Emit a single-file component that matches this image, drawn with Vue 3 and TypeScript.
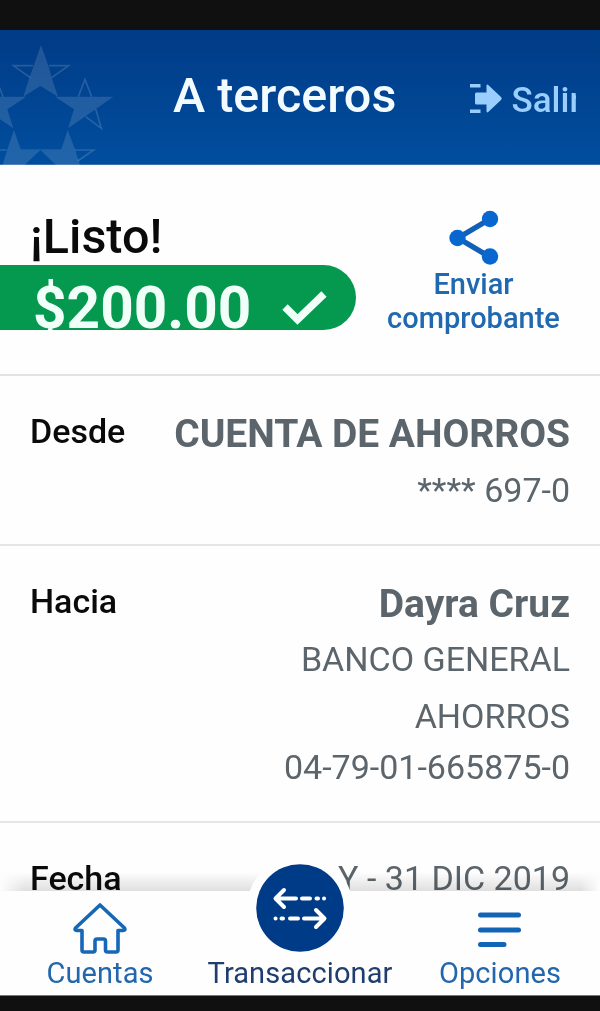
<script setup lang="ts">
interface Row {
  label: string
  title?: string
  lines: string[]
  kind: string
}

const rows: Row[] = [
  { label: 'Desde', title: 'CUENTA DE AHORROS', lines: ['**** 697-0'], kind: 'from' },
  { label: 'Hacia', title: 'Dayra Cruz', lines: ['BANCO GENERAL', 'AHORROS', '04-79-01-665875-0'], kind: 'to' },
  { label: 'Fecha', lines: ['Y - 31 DIC 2019'], kind: 'date' },
]
</script>

<template>
  <div class="screen">
    <div class="status"></div>
    <header class="header">
      <svg class="stars" width="120" height="135" viewBox="0 30 360 405">
        <g fill="#fff" fill-opacity=".13">
          <path d="M123 75 147 143 157 180 174 230 121 198 70 230 86 180 99 143Z" />
          <path d="M340 230 265 283 204 325 222 268 165 230H235Z" />
          <path d="M-96 230-21 283 40 325 22 268 79 230H9Z" />
          <path d="M203 330 225 388 240 435H168L121 390V388H184Z" />
          <path d="M42 330 62 388H121V390L74 435H8L22 388Z" />
        </g>
        <g fill="none" stroke="#fff" stroke-opacity=".15" stroke-width="5">
          <path d="M99 137H40L91 173M147 137H206L155 173" />
          <path d="M235 230 255 178 275 230M257 290 304 325 287 267" />
          <path d="M9 230-11 178-30 227" />
          <path d="M224 390H281L233 423M20 390H-37" />
        </g>
      </svg>
      <h1>A terceros</h1>
      <div class="exit">
        <svg width="33" height="32" viewBox="0 0 33 32">
          <path d="M0 1H10.500V4.500H0ZM0 26.500H10.500V30H0Z" fill="#99ceff" />
          <path d="M6.500 9.500H16.500V3Q16.500 .5 18.500 2.200L31 14Q32.500 15.500 31 17L18.500 28.800Q16.500 30.500 16.500 28V21.500H6.500Q5 21.500 5 20V11Q5 9.500 6.500 9.500Z" fill="#99ceff" />
        </svg>
        <span>Salir</span>
      </div>
    </header>

    <section class="summary">
      <div class="done">
        <h2>¡Listo!</h2>
        <div class="amount">
          <span>$200.00</span>
          <svg width="46" height="36" viewBox="0 0 46 36">
            <path d="M4 18 16.500 30.500 43 5" fill="none" stroke="#f0fff8" stroke-width="7.500" />
          </svg>
        </div>
      </div>
      <div class="share">
        <svg width="50" height="56" viewBox="0 0 50 56">
          <path d="M41 9 9 28 41 47" fill="none" stroke="#1260b5" stroke-width="5.500" />
          <g fill="#0867cf"><circle cx="41" cy="9" r="8.200" /><circle cx="8.500" cy="28" r="8.200" /><circle cx="41" cy="46.500" r="8.200" /></g>
        </svg>
        <span>Enviar</span>
        <span class="receipt">comprobante</span>
      </div>
    </section>

    <section v-for="row in rows" :key="row.label" class="row" :class="row.kind">
      <div class="label">{{ row.label }}</div>
      <div class="values">
        <strong v-if="row.title">{{ row.title }}</strong>
        <span v-for="line in row.lines" :key="line">{{ line }}</span>
      </div>
    </section>

    <nav class="nav">
      <div class="shade"></div>
      <div class="halo"></div>
      <div class="bar">
        <div class="item accounts">
          <svg width="56" height="54" viewBox="0 0 56 54">
            <path d="M28 3 52.500 26Q54 28.500 51 28.500H46V48Q46 50 44 50H35.500Q33.500 50 33.500 48V39Q33.500 37 31.500 37H25Q23 37 23 39V48Q23 50 21 50H12Q10 50 10 48V28.500H5Q2 28.500 3.500 26Z" fill="none" stroke="#1767b7" stroke-width="3.600" stroke-linejoin="round" />
          </svg>
          <span>Cuentas</span>
        </div>
        <div class="item transact">
          <svg width="88" height="88" viewBox="0 0 88 88">
            <circle cx="44" cy="44" r="43.800" fill="#003b87" />
            <g fill="none" stroke="#fff" stroke-width="4" stroke-linecap="round" stroke-linejoin="round">
              <path d="M28 26 19.500 34.500 28 43M21 34.500H40M46 34.500H54" />
              <path d="M60.500 34.500H62M68 34.500H68.100M19.500 54.500H19.600M25.500 54.500H27M34 54.500H42M48 54.500H67M60 46 68.500 54.500 60 63" />
            </g>
          </svg>
          <span>Transaccionar</span>
        </div>
        <div class="item options">
          <svg width="46" height="38" viewBox="0 0 46 38">
            <path d="M3.500 4H41.500M3.500 19H41.500M3.500 33.500H27" fill="none" stroke="#1264b7" stroke-width="5" stroke-linecap="round" />
          </svg>
          <span>Opciones</span>
        </div>
      </div>
      <div class="bottom"></div>
    </nav>
  </div>
</template>

<style>
body { margin: 0; }
</style>

<style scoped>
* { box-sizing: border-box; }
.screen {
  position: relative;
  width: 600px;
  height: 1011px;
  overflow: hidden;
  background: #fefefe;
  font-family: Roboto, "Liberation Sans", sans-serif;
  color: #0a0a0a;
}
.status { height: 30px; background: #101010; }
.header {
  position: relative;
  display: flex;
  height: 135px;
  background: linear-gradient(#003b86, #014e9e);
  border-bottom: 1px solid #3974b0;
}
.stars { position: absolute; left: 0; top: 0; overflow: hidden; }
h1, h2 { margin: 0; font-weight: 500; white-space: nowrap; }
h1 { margin-left: 173px; width: 296.500px; font-size: 48.500px; line-height: 56px; padding-top: 38px; color: #f2fbff; }
.exit {
  display: flex;
  align-items: flex-start;
  width: 106px;
  overflow: hidden;
  padding-top: 53px;
  color: #99ceff;
  font-size: 35px;
  font-weight: 500;
  line-height: 36px;
}
.exit svg { flex: none; }
.exit span { margin-left: 9px; }
.summary { display: flex; height: 211px; border-bottom: 2px solid #e0e2e4; }
.done { width: 370px; }
h2 { height: 100px; padding: 44px 0 0 30px; font-size: 48.500px; line-height: 56px; }
.amount {
  display: flex;
  width: 356px;
  height: 65px;
  overflow: hidden;
  border-radius: 0 33px 33px 0;
  background: #05994f;
  color: #f0fff8;
  font-size: 58.500px;
  font-weight: 700;
  line-height: 68px;
}
.amount span { margin-left: 33px; width: 248px; padding-top: 9px; }
.amount svg { margin-top: 24px; }
.share { display: flex; flex-direction: column; align-items: center; width: 207px; padding-top: 45px; color: #2069b0; font-size: 29px; font-weight: 500; line-height: 34px; }
.share span { margin-top: 1px; }
.share .receipt { margin-top: 0; }
.row { display: flex; justify-content: space-between; padding: 0 30px; border-bottom: 2px solid #e3e5e7; white-space: nowrap; }
.label { font-size: 34px; font-weight: 500; line-height: 40px; }
.values { display: flex; flex-direction: column; align-items: flex-end; color: #5b656b; font-size: 34px; line-height: 40px; }
.values strong { font-size: 39px; line-height: 46px; }
.from { height: 170px; padding-top: 35px; }
.from strong { letter-spacing: -.05px; }
.from .values span { margin-top: 13px; }
.to { height: 277px; padding-top: 35px; }
.to .values span:nth-of-type(1) { margin-top: 12px; }
.to .values span:nth-of-type(2) { margin-top: 17px; }
.to .values span:nth-of-type(3) { margin-top: 11px; }
.date { border: 0; padding-top: 35px; }
.nav { position: absolute; left: 0; bottom: 0; width: 600px; height: 120px; }
.shade { position: absolute; left: 0; top: -19px; width: 100%; height: 19px; background: linear-gradient(90deg, #fefefe, transparent 25px, transparent 580px, #fefefe), linear-gradient(rgba(0, 0, 0, 0), rgba(0, 0, 0, .12)); mix-blend-mode: multiply; }
.halo { position: absolute; left: 247px; top: -36px; width: 106px; height: 106px; border-radius: 50%; background: #fefefe; }
.bar { position: relative; display: flex; height: 104px; }
.bar::before { content: ""; position: absolute; inset: 0; background: #fefefe; }
.item { position: relative; display: flex; flex-direction: column; align-items: center; width: 200px; color: #2267ad; font-size: 29px; line-height: 34px; letter-spacing: .1px; }
.item svg { flex: none; }
.accounts svg { margin-top: 11px; }
.transact { color: #203d70; }
.transact svg { margin-top: -27px; }
.transact span { margin-top: 4px; }
.options svg { margin-top: 20px; }
.options span { margin-top: 7px; }
.bottom { height: 16px; background: #101010; border-top: 1px solid #777; }
</style>
